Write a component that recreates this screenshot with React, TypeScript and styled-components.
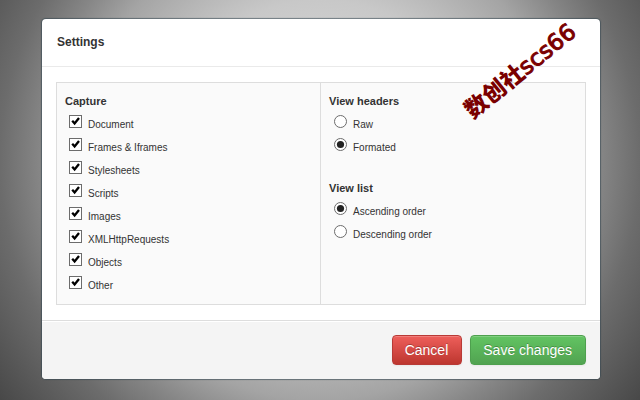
import React from "react";
import styled, { createGlobalStyle } from "styled-components";

const GlobalStyle = createGlobalStyle`
  *, *::before, *::after { box-sizing: border-box; }
  body {
    margin: 0;
    color: #333;
    font-family: "Liberation Sans", Arial, sans-serif;
    font-size: 10px;
  }
`;

const Backdrop = styled.div`
  min-height: 100vh;
  padding: 19px 40px 21px 42px;
  background: radial-gradient(
    circle farthest-corner at 50% 40%,
    #e6e6e6 0%,
    #c8c8c8 40%,
    #a4a4a4 60%,
    #868686 70%,
    #6c6c6c 80%,
    #5a5a5a 90%,
    #484848 100%
  );
`;

const Dialog = styled.form`
  position: relative;
  border-radius: 4px;
  background: #fff;
  box-shadow: 0 0 1px 1px rgba(50, 70, 80, 0.6);
`;

const Header = styled.header`
  padding: 15px;
  border-bottom: 1px solid #eaeaea;
`;

const Title = styled.h1`
  margin: 0;
  font-size: 12px;
  line-height: 17px;
`;

const Body = styled.div`
  padding: 15px 14px;
`;

const Panel = styled.div`
  display: grid;
  grid-template-columns: 1fr 1fr;
  border: 1px solid #ddd;
  background: #fafafa;
`;

const Column = styled.div`
  display: flex;
  flex-direction: column;
  gap: 23px;
  padding: 9px 8px 10px;

  &:first-child {
    border-right: 1px solid #ddd;
  }
`;

const Group = styled.fieldset`
  margin: 0;
  padding: 0;
  border: 0;
`;

const Legend = styled.legend`
  padding: 0;
  font-size: 11px;
  font-weight: 700;
  line-height: 18px;
`;

const Option = styled.label<{ $indent: number }>`
  display: flex;
  gap: 6px;
  height: 23px;
  padding: 5px 4px 3px ${(p) => p.$indent}px;
  line-height: 20px;
`;

const Control = styled.span`
  display: grid;
  flex: none;
  width: 13px;
  height: 13px;

  & > * {
    grid-area: 1 / 1;
  }
`;

const ChoiceInput = styled.input`
  appearance: none;
  width: 13px;
  height: 13px;
  margin: 0;
  border: 1px solid #6c6c6c;
  border-radius: ${(p) => (p.type === "radio" ? "50%" : "0")};
  background: #fff;

  & + svg {
    visibility: hidden;
    pointer-events: none;
  }

  &:checked + svg {
    visibility: visible;
  }
`;

const Footer = styled.footer`
  display: flex;
  justify-content: flex-end;
  gap: 8px;
  padding: 14px;
  border-top: 1px solid #ddd;
  border-radius: 0 0 4px 4px;
  background: #f4f4f4;
  box-shadow: inset 0 1px 0 #fff;
`;

const Button = styled.button<{ $tone: "red" | "green" }>`
  height: 30px;
  padding: 0 13px 0 12px;
  border: 1px solid ${(p) => (p.$tone === "red" ? "#b83a36" : "#4ea04e")};
  border-radius: 4px;
  background: ${(p) =>
    p.$tone === "red"
      ? "linear-gradient(#ee5f5b, #bd362f)"
      : "linear-gradient(#62c462, #51a351)"};
  box-shadow: inset 0 1px 0 rgba(255, 255, 255, 0.2), 0 1px 2px rgba(0, 0, 0, 0.05);
  color: #fff;
  font-family: inherit;
  font-size: 14px;
  line-height: 28px;
  text-shadow: 0 -1px 0 rgba(0, 0, 0, 0.25);
`;

const Stamp = styled.div`
  position: absolute;
  top: 34px;
  right: 13px;
  color: #7a0000;
  font-family: "DejaVu Sans", "Noto Sans CJK SC", sans-serif;
  font-size: 23px;
  line-height: 32px;
  white-space: nowrap;
  transform: rotate(-39deg);
  pointer-events: none;
`;

const StampName = styled.span`
  font-family: "Noto Sans CJK SC", sans-serif;
  font-weight: 900;
`;

const StampCode = styled.span`
  -webkit-text-stroke: 1px #7a0000;
`;

const CheckMark = () => (
  <svg width="13" height="13" viewBox="0 0 13 13" fill="none">
    <path d="M3.2 5.8 L5.6 8.4 L10 3" stroke="#000" strokeWidth="2.3" />
  </svg>
);

const RadioDot = () => (
  <svg width="13" height="13" viewBox="0 0 13 13">
    <circle cx="6.5" cy="6.5" r="3.6" fill="#222" />
  </svg>
);

interface ChoiceProps {
  type: "checkbox" | "radio";
  name: string;
  label: string;
  checked: boolean;
}

const Choice = ({ type, name, label, checked }: ChoiceProps) => (
  <Option $indent={type === "radio" ? 5 : 4}>
    <Control>
      <ChoiceInput type={type} name={name} value={label} defaultChecked={checked} />
      {type === "checkbox" ? <CheckMark /> : <RadioDot />}
    </Control>
    {label}
  </Option>
);

interface ChoiceGroupProps {
  type: "checkbox" | "radio";
  name: string;
  title: string;
  options: string[];
  selected: string[];
}

const ChoiceGroup = ({ type, name, title, options, selected }: ChoiceGroupProps) => (
  <Group>
    <Legend>{title}</Legend>
    {options.map((label) => (
      <Choice key={label} type={type} name={name} label={label} checked={selected.includes(label)} />
    ))}
  </Group>
);

const captures = [
  "Document",
  "Frames & Iframes",
  "Stylesheets",
  "Scripts",
  "Images",
  "XMLHttpRequests",
  "Objects",
  "Other",
];

export default function App() {
  return (
    <>
      <GlobalStyle />
      <Backdrop>
        <Dialog onSubmit={(e) => e.preventDefault()}>
          <Header>
            <Title>Settings</Title>
          </Header>
          <Body>
            <Panel>
              <Column>
                <ChoiceGroup type="checkbox" name="capture" title="Capture" options={captures} selected={captures} />
              </Column>
              <Column>
                <ChoiceGroup
                  type="radio"
                  name="headers"
                  title="View headers"
                  options={["Raw", "Formated"]}
                  selected={["Formated"]}
                />
                <ChoiceGroup
                  type="radio"
                  name="list"
                  title="View list"
                  options={["Ascending order", "Descending order"]}
                  selected={["Ascending order"]}
                />
              </Column>
            </Panel>
          </Body>
          <Footer>
            <Button type="button" $tone="red">Cancel</Button>
            <Button type="submit" $tone="green">Save changes</Button>
          </Footer>
          <Stamp>
            <StampName>数创社</StampName>
            <StampCode>scs66</StampCode>
          </Stamp>
        </Dialog>
      </Backdrop>
    </>
  );
}
